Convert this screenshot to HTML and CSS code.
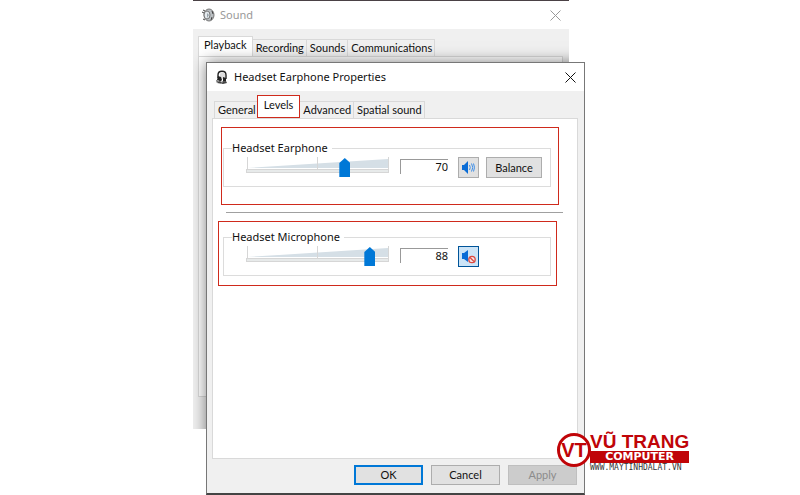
FILE: index.html
```html
<!DOCTYPE html>
<html lang="en">
<head>
    <meta charset="UTF-8">
    <meta name="viewport" content="width=device-width, initial-scale=1.0">
    <title>Headset Earphone Properties</title>
    <link rel="stylesheet" href="styles.css">
</head>
<body>
    <main class="desktop">
        <section class="window window-back">
            <header class="titlebar">
                <svg class="title-icon" width="14" height="14" viewBox="0 0 14 14">
                    <ellipse cx="8" cy="7" rx="5" ry="6" fill="#b9bec2" stroke="#777" />
                    <ellipse cx="6" cy="7" rx="3" ry="4" fill="#e4eaee" stroke="#777" />
                    <path d="M6 5l2 2-2 3z" fill="#9aa4ab" />
                    <path d="M2 2l2 1M1 4l2 1M2 11l2 1M11 3l1 3M11 9l-1 3" stroke="#444" />
                </svg>
                <h2>Sound</h2>
                <button type="button" class="close" aria-label="Close">
                    <svg width="11" height="11" viewBox="0 0 11 11"><path d="M.5.5l10 10M10.5.5l-10 10" stroke="currentColor" fill="none" /></svg>
                </button>
            </header>
            <nav class="tabs">
                <button type="button" class="tab active">Playback</button>
                <button type="button" class="tab">Recording</button>
                <button type="button" class="tab">Sounds</button>
                <button type="button" class="tab">Communications</button>
            </nav>
            <div class="panel"></div>
        </section>

        <section class="window window-front">
            <header class="titlebar">
                <svg class="title-icon" width="14" height="15" viewBox="0 0 14 15">
                    <path d="M3 8V5c0-5 8-5 8 0v4" fill="none" stroke="#222" stroke-width="1.4" />
                    <path d="M5 4c1-2 4-2 5 0v5H5z" fill="#ddd" />
                    <path d="M3 6l3 1 1 3-2 2-3-2zM8 7l3 1v3l-3 1z" fill="#222" />
                    <path d="M1 10l4 2 6-1 1 2-4 1-6-1z" fill="#444" />
                    <path d="M2 13l2-3M6 14l2-3" stroke="#999" />
                </svg>
                <h1>Headset Earphone Properties</h1>
                <button type="button" class="close" aria-label="Close">
                    <svg width="11" height="11" viewBox="0 0 11 11"><path d="M.5.5l10 10M10.5.5l-10 10" stroke="currentColor" fill="none" /></svg>
                </button>
            </header>
            <nav class="tabs">
                <button type="button" class="tab">General</button>
                <button type="button" class="tab active marked">Levels</button>
                <button type="button" class="tab">Advanced</button>
                <button type="button" class="tab">Spatial sound</button>
            </nav>
            <div class="panel">
                <div class="highlight highlight-earphone">
                    <fieldset class="group">
                        <legend>Headset Earphone</legend>
                        <div class="level">
                            <div class="slider">
                                <svg class="scale" width="144" height="18" viewBox="0 0 144 18">
                                    <path d="M2 11L142 2v9z" fill="#d5dfe6" />
                                    <path d="M1.500 0v12M71.500 0v12M142.500 0v12" stroke="#d6d6d6" />
                                    <rect x=".5" y="12.500" width="142" height="3" fill="#e7eaea" stroke="#d6d6d6" />
                                </svg>
                                <input type="range" min="0" max="100" value="70" aria-label="Headset Earphone level">
                            </div>
                            <input type="text" class="value" value="70" aria-label="Headset Earphone value">
                            <button type="button" class="mute" aria-label="Mute">
                                <svg width="15" height="15" viewBox="0 0 15 15">
                                    <path d="M1 5h2l4-4v13l-4-4H1z" fill="#0a6cd6" />
                                    <path d="M8.500 5q1.500 2.500 0 5M10.500 3.500q2.500 4 0 8M12.500 3.500q2 4 0 8" stroke="#3c8ee8" fill="none" />
                                </svg>
                            </button>
                            <button type="button" class="button balance">Balance</button>
                        </div>
                    </fieldset>
                </div>
                <hr class="divider">
                <div class="highlight highlight-microphone">
                    <fieldset class="group">
                        <legend>Headset Microphone</legend>
                        <div class="level">
                            <div class="slider">
                                <svg class="scale" width="144" height="18" viewBox="0 0 144 18">
                                    <path d="M2 11L142 2v9z" fill="#d5dfe6" />
                                    <path d="M1.500 0v12M71.500 0v12M142.500 0v12" stroke="#d6d6d6" />
                                    <rect x=".5" y="12.500" width="142" height="3" fill="#e7eaea" stroke="#d6d6d6" />
                                </svg>
                                <input type="range" min="0" max="100" value="88" aria-label="Headset Microphone level">
                            </div>
                            <input type="text" class="value" value="88" aria-label="Headset Microphone value">
                            <button type="button" class="mute muted" aria-label="Unmute">
                                <svg width="15" height="15" viewBox="0 0 15 15">
                                    <path d="M1 4h2l4-3v12l-4-3H1z" fill="#0a6cd6" />
                                    <circle cx="11" cy="10.500" r="3.200" fill="#f5e4e6" stroke="#dc4a42" stroke-width="1.300" />
                                    <path d="M9 8.500l4 4" stroke="#dc4a42" stroke-width="1.300" />
                                </svg>
                            </button>
                        </div>
                    </fieldset>
                </div>
            </div>
            <footer class="actions">
                <button type="button" class="button primary">OK</button>
                <button type="button" class="button">Cancel</button>
                <button type="button" class="button" disabled>Apply</button>
            </footer>
        </section>

        <div class="logo">
            <svg class="logo-mark" width="36" height="36" viewBox="0 0 36 36">
                <circle cx="18" cy="18" r="15.500" fill="#fff" stroke="#c00408" stroke-width="3" />
                <text x="18" y="25" text-anchor="middle" class="logo-letters">VT</text>
            </svg>
            <div class="logo-text">
                <strong class="logo-name">VŨ TRANG</strong>
                <span class="logo-sub">COMPUTER</span>
                <span class="logo-url">WWW.MAYTINHDALAT.VN</span>
            </div>
        </div>
    </main>
</body>
</html>
```
FILE: styles.css
```css
*{
    margin: 0;
    padding: 0;
    box-sizing: border-box;
}
body{
    background-color: #fff;
    color: #111;
    font-family: "Noto Sans", "Open Sans", sans-serif;
    font-size: 11px;
    line-height: 14px;
}
button, input{
    font: inherit;
    color: inherit;
}
.desktop{
    position: relative;
    min-height: 100vh;
    overflow: hidden;
}

/* windows */
.window{
    position: absolute;
    background-color: #f0f0f0;
}
.window-back{
    left: 193px;
    top: 0;
    width: 376px;
    overflow: hidden;
    border-top: 1px solid #4a4145;
    padding-bottom: 32px;
}
/* shadow that the front window casts on this one */
.window-back::after{
    content: "";
    position: absolute;
    left: 13px;
    top: 61px;
    width: 379px;
    height: 432px;
    box-shadow: 0 0 14px rgba(0, 0, 0, 0.5);
}
.window-front{
    left: 206px;
    top: 62px;
    width: 379px;
    border: 1px solid #777;
    border-bottom: 2px solid #444;
}
.titlebar{
    display: flex;
    align-items: center;
    gap: 5px;
    height: 28px;
    padding: 0 8px;
    background-color: #fff;
}
.titlebar h1, .titlebar h2{
    flex: 1;
    font-size: 11px;
    font-weight: normal;
}
.window-back h2, .window-back .close{
    color: #999;
}
.close{
    display: flex;
    border: none;
    background: none;
}

/* tabs */
.tabs{
    display: flex;
    align-items: flex-end;
    height: 27px;
    padding: 0 5px;
}
.window-front .tabs{
    padding: 0 7px;
}
.tab, .button{
    font-family: Lato, "Noto Sans", sans-serif;
}
.tab{
    height: 17px;
    padding: 0 2px 0 3px;
    border: 1px solid #d9d9d9;
    border-bottom: none;
    background-color: #f0f0f0;
    white-space: nowrap;
}
.tab + .tab{
    border-left: none;
}
.tab.active{
    height: 20px;
    padding: 0 5px 3px;
    background-color: #fff;
}
.tabs .tab.marked{
    height: 23px;
    margin-left: -2px;
    padding: 0 6px 3px;
    border: 1px solid #cf2a1c;
}
.panel{
    margin: 0 6px 0 5px;
    min-height: 341px;
    border: 1px solid #d9d9d9;
    background-color: #fff;
}

/* levels */
.highlight{
    border: 1px solid #cf2a1c;
}
.highlight-earphone{
    margin: 8px 18px 7px 8px;
    padding: 13px 7px 17px 1px;
}
.highlight-microphone{
    margin: 8px 20px 0 5px;
    padding: 8px 5px 9px 4px;
}
.group{
    height: 46px;
    padding: 0 8px;
    border: 1px solid #dcdcdc;
}
.group legend{
    padding: 0 4px 0 0;
}
.level{
    display: flex;
    align-items: flex-start;
}
.slider{
    display: grid;
    width: 150px;
    margin: 1px 8px 0 10px;
}
.scale{
    grid-area: 1 / 1;
    margin: 1px 0 0 4px;
}
.slider input{
    grid-area: 1 / 1;
    width: 100%;
    height: 23px;
    appearance: none;
    background: none;
}
.slider input::-webkit-slider-thumb{
    appearance: none;
    width: 11px;
    height: 19px;
    background-color: #0078d7;
    clip-path: polygon(0 5px, 50% 0, 100% 5px, 100% 100%, 0 100%);
}
.value{
    width: 48px;
    height: 15px;
    margin: 4px 10px 0 0;
    padding-bottom: 2px;
    border: 1px solid #999;
    border-width: 1px 0 0 1px;
    background-color: #fff;
    text-align: right;
}
.mute{
    display: flex;
    align-items: center;
    justify-content: center;
    width: 21px;
    height: 21px;
    margin: 2px 7px 0 0;
    border: 1px solid #adadad;
    background-color: #e1e1e1;
}
.mute.muted{
    border-color: #005499;
    background-color: #cce4f7;
}
.divider{
    margin: 0 14px 0 13px;
    border: none;
    border-top: 1px solid #a0a0a0;
}

/* buttons */
.button{
    width: 69px;
    height: 20px;
    border: 1px solid #adadad;
    background-color: #e1e1e1;
}
.button.primary{
    border: 2px solid #0078d7;
}
.button:disabled{
    border-color: #bfbfbf;
    background-color: #ccc;
    color: #8b8b8b;
}
.button.balance{
    width: 56px;
    height: 21px;
    margin-top: 2px;
}
.actions{
    display: flex;
    justify-content: flex-end;
    gap: 8px;
    padding: 6px 7px 8px;
}

/* logo */
.logo{
    position: absolute;
    left: 556px;
    top: 432px;
    display: flex;
}
.logo-letters{
    font-family: "Liberation Sans", sans-serif;
    font-size: 20px;
    font-weight: bold;
    fill: #c00408;
}
.logo-text{
    display: flex;
    flex-direction: column;
    margin-left: -2px;
    font-family: "Liberation Sans", sans-serif;
}
.logo-name{
    font-size: 19px;
    line-height: 19px;
    color: #c00408;
}
.logo-sub{
    background-color: #c00408;
    color: #fff;
    font-family: "DejaVu Sans", sans-serif;
    font-size: 11px;
    font-weight: bold;
    line-height: 12px;
    text-align: center;
}
.logo-url{
    font-family: "DejaVu Sans Mono", monospace;
    font-size: 8px;
    line-height: 10px;
    color: #333;
}
```
